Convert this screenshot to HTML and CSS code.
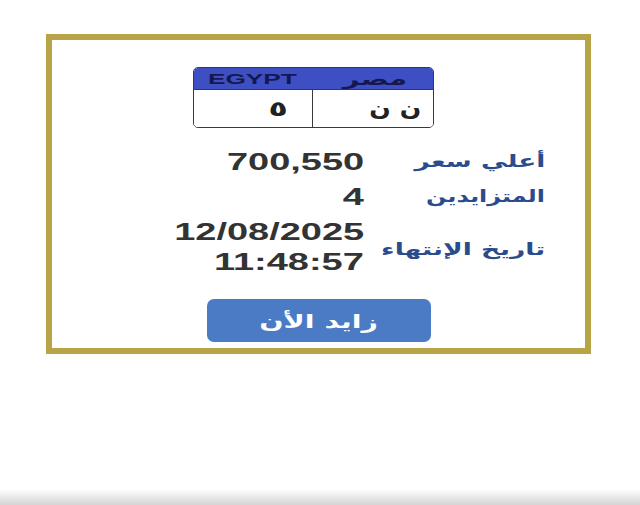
FILE: index.html
```html
<!DOCTYPE html>
<html lang="ar">
<head>
<meta charset="utf-8">
<link rel="stylesheet" href="styles.css">
</head>
<body>
<div class="card">
  <div class="plate">
    <div class="plate-head">
      <span class="en sx-c">EGYPT</span>
      <span class="ar-head sx-c" dir="rtl">مصر</span>
    </div>
    <div class="plate-body">
      <div class="cell cell-num"><span class="sx-r" dir="rtl">٥</span></div>
      <div class="cell cell-let"><span class="sx-r" dir="rtl">ن ن</span></div>
    </div>
  </div>
  <div class="rows">
    <div class="row r1">
      <div class="val"><span class="sx-r">700,550</span></div>
      <div class="lbl"><span class="sx-r" dir="rtl">أعلي سعر</span></div>
    </div>
    <div class="row r2">
      <div class="val"><span class="sx-r">4</span></div>
      <div class="lbl"><span class="sx-r" dir="rtl">المتزايدين</span></div>
    </div>
    <div class="row r3">
      <div class="val">
        <div><span class="sx-r">12/08/2025</span></div>
        <div><span class="sx-r">11:48:57</span></div>
      </div>
      <div class="lbl"><span class="sx-r" dir="rtl">تاريخ الإنتهاء</span></div>
    </div>
  </div>
  <button class="bid"><span class="sx-c" dir="rtl">زايد الأن</span></button>
</div>
<div class="spacer"></div>
<div class="shade"></div>
</body>
</html>
```
FILE: styles.css
```css
html, body {
  margin: 0;
  padding: 0;
}
body {
  height: 505px;
  overflow: hidden;
  background: #ffffff;
  display: flex;
  flex-direction: column;
}
.card {
  margin: 34px 0 0 46px;
  width: 545px;
  height: 320px;
  box-sizing: border-box;
  border: 6px solid #b7a446;
  display: flex;
  flex-direction: column;
  align-items: center;
  flex-shrink: 0;
}
.sx-r, .sx-c {
  display: inline-block;
  transform: scaleX(1.65);
}
.sx-r { transform-origin: right center; }
.sx-c { transform-origin: center center; }

.plate {
  margin-top: 27px;
  margin-right: 10px;
  width: 241px;
  height: 61px;
  box-sizing: border-box;
  border: 1.5px solid #3a3a3a;
  border-radius: 5px;
  overflow: hidden;
  display: flex;
  flex-direction: column;
}
.plate-head {
  height: 21px;
  background: #3d4fc2;
  border-bottom: 1.5px solid #3a3a3a;
  display: flex;
  align-items: center;
  justify-content: space-between;
  padding: 0 26px 0 26px;
  color: #141850;
  font-family: "Liberation Sans", Arial, sans-serif;
  font-weight: bold;
}
.plate-head .en {
  font-size: 15px;
  transform: scaleX(1.75);
  margin-left: 7px;
}
.plate-head .ar-head {
  font-family: "DejaVu Sans", sans-serif;
  font-size: 17px;
  transform: scaleX(1.7);
  margin-right: 13px;
}
.plate-body {
  flex: 1;
  display: flex;
  background: #fff;
}
.cell {
  display: flex;
  align-items: center;
  justify-content: flex-end;
  box-sizing: border-box;
  font-family: "DejaVu Sans", sans-serif;
  font-weight: bold;
  font-size: 21px;
  color: #222;
}
.cell-num {
  width: 119px;
  border-right: 1.5px solid #3a3a3a;
  padding-right: 24px;
}
.cell-let {
  flex: 1;
  padding-right: 12px;
}
.cell-let span { transform: scaleX(1.2); }
.cell-num span { transform: scaleX(1.5); }

.rows {
  margin-top: 19px;
  width: 100%;
  display: flex;
  flex-direction: column;
  gap: 5px;
}
.row {
  display: flex;
  align-items: center;
}
.val {
  width: 312px;
  text-align: right;
  font-family: "Liberation Sans", Arial, sans-serif;
  font-weight: bold;
  font-size: 23px;
  line-height: 30px;
  color: #333333;
}
.lbl {
  width: 181px;
  text-align: right;
  font-family: "DejaVu Sans", sans-serif;
  font-weight: bold;
  font-size: 17px;
  line-height: 24px;
  color: #2b4c8c;
}
.r1 .lbl span { transform: scaleX(1.55); }
.r2 .lbl span { transform: scaleX(1.4); }
.r3 .lbl span { transform: scaleX(1.56); }
.r1 .lbl, .r2 .lbl { margin-top: -2px; }
.r3 .lbl { margin-top: 4px; }

.bid {
  margin-top: 22px;
  width: 224px;
  height: 43px;
  border: none;
  border-radius: 7px;
  background: #4a7bc4;
  color: #ffffff;
  font-family: "DejaVu Sans", sans-serif;
  font-weight: bold;
  font-size: 19px;
  padding: 0;
}
.bid span { transform: scaleX(1.5); }
.spacer {
  flex: 1;
}
.shade {
  height: 16px;
  background: linear-gradient(to bottom, rgba(210,210,210,0), #d4d4d4);
  flex-shrink: 0;
}
```
